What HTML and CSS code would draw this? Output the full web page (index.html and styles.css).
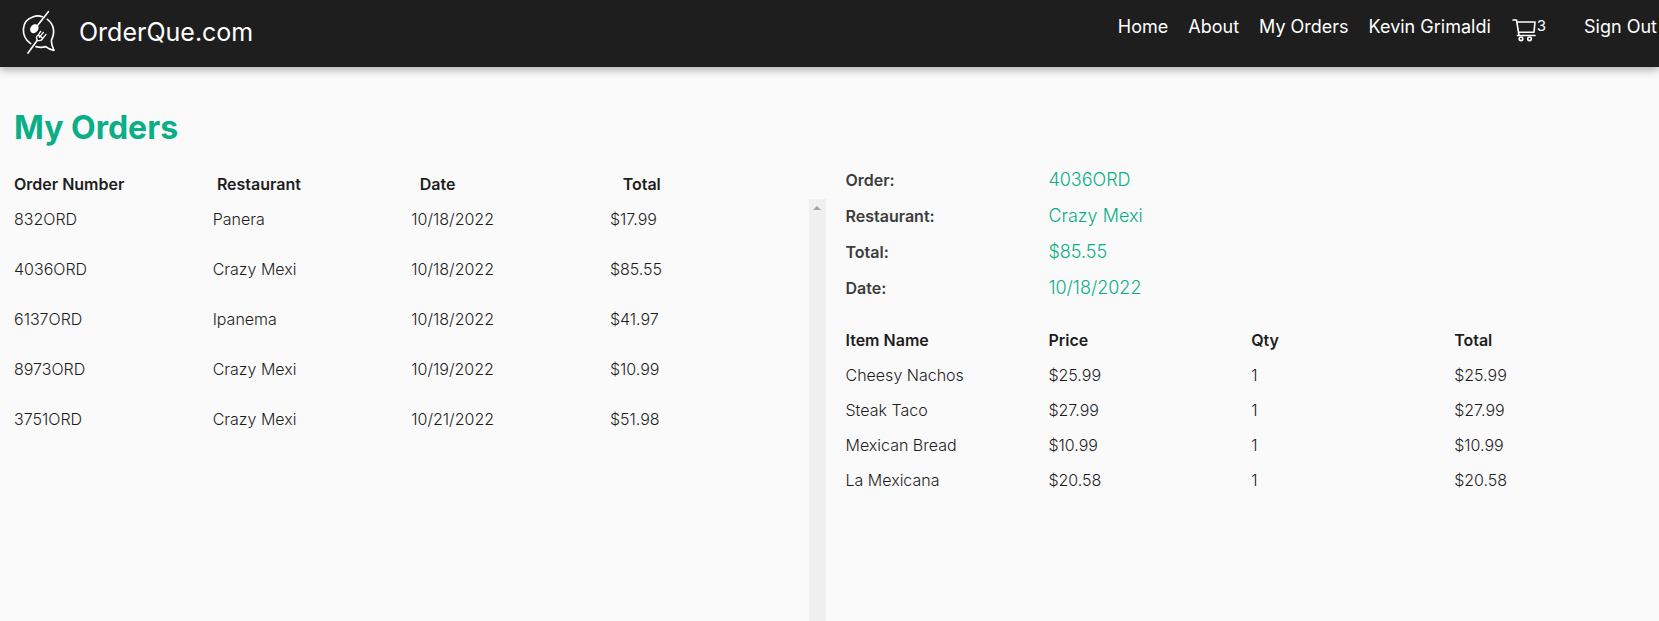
FILE: index.html
```html
<!DOCTYPE html>
<html lang="en">
<head>
<meta charset="utf-8">
<title>OrderQue.com</title>
<link rel="stylesheet" href="styles.css">
</head>
<body>
<header class="topbar">
  <a class="brand" href="#">
    <svg class="brand-logo" viewBox="0 0 180 180" fill="none" stroke="#fff" stroke-width="5" stroke-linecap="round" stroke-linejoin="round" aria-hidden="true">
      <path d="M62 131C30 108 34 62 68 51Q82 45 97 50"/>
      <path d="M112 58C132 72 136 98 124 121Q124 136 132 151Q118 149 107 140Q93 144 78 140"/>
      <path d="M115 35L82 77"/>
      <ellipse cx="73" cy="86" rx="9" ry="12" transform="rotate(38 73 86)" fill="#fff"/>
      <path d="M54 159L82 121"/>
      <path d="M82 121Q76 110 84 106L92 94M82 121Q94 124 98 116L108 103M88 112L100 97M84 106Q92 106 98 116" stroke-width="4"/>
    </svg>
    <span>OrderQue.com</span>
  </a>
  <nav class="nav">
    <a href="#">Home</a>
    <a href="#">About</a>
    <a href="#">My Orders</a>
    <a href="#">Kevin Grimaldi</a>
    <a class="cart" href="#" aria-label="Cart, 3 items">
      <svg class="cart-icon" viewBox="0 0 24 24" fill="none" stroke="#fff" stroke-width="1.600" stroke-linecap="round" stroke-linejoin="round" aria-hidden="true">
        <path d="M1 2H4.500L7 17.500M5.200 4H23L22 14.200H6.500M5.500 17.500H23" />
        <circle cx="9" cy="20.800" r="1.800"/>
        <circle cx="17.500" cy="20.800" r="1.800"/>
      </svg>
      <span class="cart-count">3</span>
    </a>
    <a href="#">Sign Out</a>
  </nav>
</header>
<main class="page">
  <section class="orders">
    <h1>My Orders</h1>
    <table class="grid orders-table">
      <thead>
        <tr><th>Order Number</th><th>Restaurant</th><th>Date</th><th>Total</th></tr>
      </thead>
      <tbody>
        <tr><td>832ORD</td><td>Panera</td><td>10/18/2022</td><td>$17.99</td></tr>
        <tr><td>4036ORD</td><td>Crazy Mexi</td><td>10/18/2022</td><td>$85.55</td></tr>
        <tr><td>6137ORD</td><td>Ipanema</td><td>10/18/2022</td><td>$41.97</td></tr>
        <tr><td>8973ORD</td><td>Crazy Mexi</td><td>10/19/2022</td><td>$10.99</td></tr>
        <tr><td>3751ORD</td><td>Crazy Mexi</td><td>10/21/2022</td><td>$51.98</td></tr>
      </tbody>
    </table>
    <div class="scroll-track" aria-hidden="true"><span class="scroll-up"></span></div>
  </section>
  <section class="details">
    <dl class="summary">
      <dt>Order:</dt><dd>4036ORD</dd>
      <dt>Restaurant:</dt><dd>Crazy Mexi</dd>
      <dt>Total:</dt><dd>$85.55</dd>
      <dt>Date:</dt><dd>10/18/2022</dd>
    </dl>
    <table class="grid">
      <thead>
        <tr><th>Item Name</th><th>Price</th><th>Qty</th><th>Total</th></tr>
      </thead>
      <tbody>
        <tr><td>Cheesy Nachos</td><td>$25.99</td><td>1</td><td>$25.99</td></tr>
        <tr><td>Steak Taco</td><td>$27.99</td><td>1</td><td>$27.99</td></tr>
        <tr><td>Mexican Bread</td><td>$10.99</td><td>1</td><td>$10.99</td></tr>
        <tr><td>La Mexicana</td><td>$20.58</td><td>1</td><td>$20.58</td></tr>
      </tbody>
    </table>
  </section>
</main>
</body>
</html>
```
FILE: styles.css
```css
* {
  box-sizing: border-box;
}

body {
  margin: 0;
  min-height: 100vh;
  display: flex;
  flex-direction: column;
  background: #fafafa;
  color: #1e1e1e;
  font: 300 16px/20px Inter, "Liberation Sans", sans-serif;
}

a {
  color: inherit;
  text-decoration: none;
}

/* Header */
.topbar {
  display: flex;
  justify-content: space-between;
  height: 67px;
  padding: 0 2px 0 10px;
  background: #1e1e1e;
  color: #fff;
  font-weight: 400;
  box-shadow: 0 3px 8px rgba(0, 0, 0, 0.3);
}

.brand {
  display: flex;
  gap: 9px;
  font-size: 25px;
  line-height: 64px;
}

.brand-logo {
  width: 60px;
  height: 60px;
}

.nav {
  display: flex;
  gap: 20px;
  font-size: 18px;
  line-height: 54px;
}

.cart {
  display: flex;
  gap: 1px;
  margin: 0 18px 0 1px;
}

.cart-icon {
  width: 24px;
  height: 24px;
  margin-top: 18px;
}

.cart-count {
  font-size: 15px;
  line-height: 52px;
}

/* Page */
.page {
  flex: 1;
  display: grid;
  grid-template-columns: 1fr 1fr;
  gap: 20px;
  padding: 0 2px 0 14px;
}

.orders {
  display: grid;
  grid-template-columns: 1fr 17px;
  grid-template-rows: auto auto 1fr;
  padding-top: 41px;
}

h1 {
  grid-column: 1 / -1;
  margin: 0 0 22px;
  color: #0aae87;
  font-size: 32px;
  font-weight: 700;
  line-height: 40px;
}

.grid,
.grid thead,
.grid tbody {
  display: block;
}

.grid tr {
  display: grid;
  grid-template-columns: repeat(4, 1fr);
}

.grid th,
.grid td {
  padding: 0 0 15px;
  text-align: left;
}

.grid th {
  font-weight: 600;
}

/* The list body shares its row with the scroll track */
.orders-table,
.orders-table thead {
  display: contents;
}

.orders-table thead tr {
  grid-column: 1 / -1;
  height: 29px;
  padding-top: 4px;
}

.orders-table tbody {
  padding-top: 10px;
}

.orders-table td {
  padding-bottom: 30px;
}

.scroll-track {
  display: flex;
  justify-content: center;
  padding-top: 7px;
  background: #f0f0f0;
}

.scroll-up {
  height: 4px;
  border: 4px solid transparent;
  border-top: 0;
  border-bottom-color: #a3a3a3;
}

.details {
  padding-top: 95px;
}

.summary {
  display: grid;
  grid-template-columns: 1fr 3fr;
  margin: 0 0 24px;
  line-height: 36px;
}

.summary dt {
  color: #3c3c3c;
  font-weight: 600;
}

.summary dd {
  margin: 0;
  color: #0aae87;
  font-size: 18px;
}
```
